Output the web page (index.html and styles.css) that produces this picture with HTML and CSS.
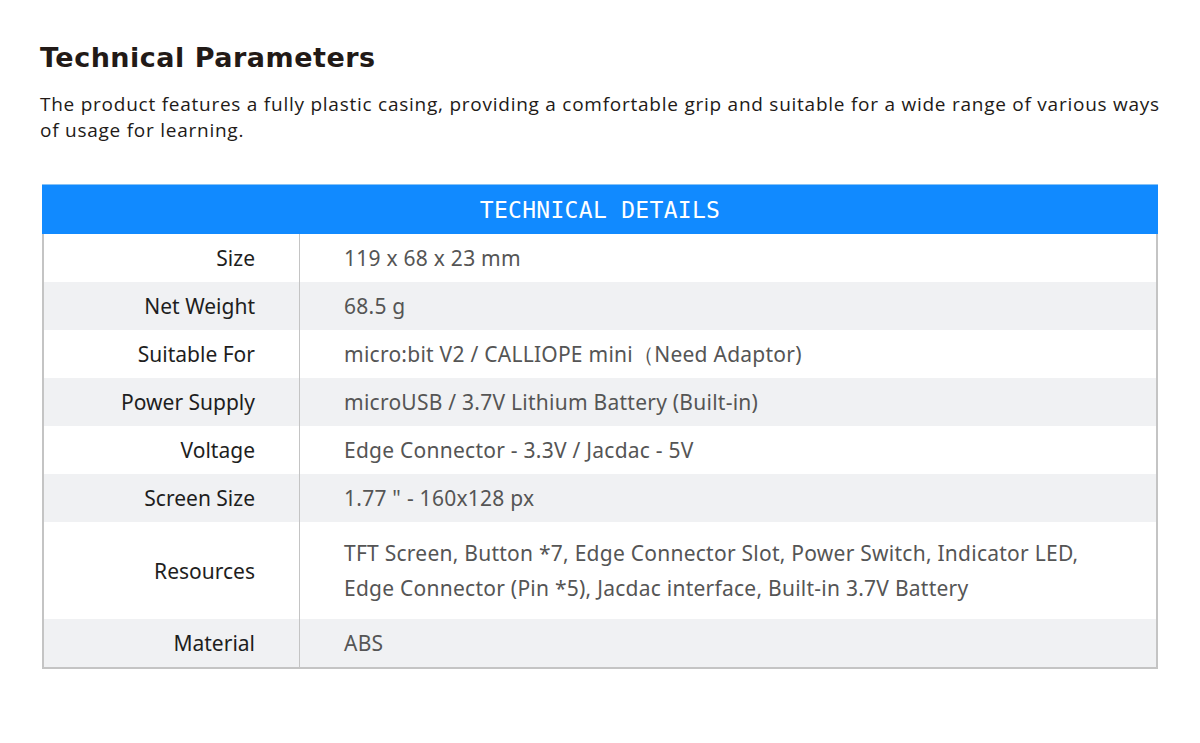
FILE: index.html
```html
<!DOCTYPE html>
<html>
<head>
<meta charset="utf-8">
<link rel="stylesheet" href="styles.css">
</head>
<body>
<div class="page">
  <h1 class="title">Technical Parameters</h1>
  <p class="intro">The product features a fully plastic casing, providing a comfortable grip and suitable for a wide range of various ways of usage for learning.</p>
  <div class="table">
    <div class="thead">TECHNICAL DETAILS</div>
    <div class="row"><div class="label">Size</div><div class="value">119 x 68 x 23 mm</div></div>
    <div class="row alt"><div class="label">Net Weight</div><div class="value">68.5 g</div></div>
    <div class="row"><div class="label">Suitable For</div><div class="value">micro:bit V2 / CALLIOPE mini（Need Adaptor)</div></div>
    <div class="row alt"><div class="label">Power Supply</div><div class="value">microUSB / 3.7V Lithium Battery (Built-in)</div></div>
    <div class="row"><div class="label">Voltage</div><div class="value">Edge Connector - 3.3V / Jacdac - 5V</div></div>
    <div class="row alt"><div class="label">Screen Size</div><div class="value">1.77 " - 160x128 px</div></div>
    <div class="row tall"><div class="label">Resources</div><div class="value">TFT Screen, Button *7, Edge Connector Slot, Power Switch, Indicator LED, Edge Connector (Pin *5), Jacdac interface, Built-in 3.7V Battery</div></div>
    <div class="row alt last"><div class="label">Material</div><div class="value">ABS</div></div>
  </div>
</div>
</body>
</html>
```
FILE: styles.css
```css
html, body {
  margin: 0;
  padding: 0;
  background: #ffffff;
}
.page {
  padding: 38px 40px 0 40px;
  font-family: "Open Sans", "Noto Sans", sans-serif;
}
.title {
  margin: 0;
  font-family: "DejaVu Sans", sans-serif;
  font-weight: bold;
  font-size: 27px;
  line-height: 40px;
  color: #221a17;
  letter-spacing: 0.5px;
}
.intro {
  margin: 13px 0 0 0;
  font-size: 19px;
  line-height: 26px;
  color: #221a17;
  letter-spacing: 0.75px;
}
.table {
  margin: 41px 0 0 2px;
  width: 1116px;
  border-top: 1px solid #86c2f5;
  border-bottom: 2px solid #c4c4c4;
  font-family: "Noto Sans", sans-serif;
}
.thead {
  height: 49px;
  background: #118aff;
  color: #ffffff;
  font-family: "DejaVu Sans Mono", monospace;
  font-size: 23px;
  display: flex;
  align-items: center;
  justify-content: center;
  letter-spacing: 0.3px;
}
.row {
  display: flex;
  min-height: 48px;
  border-left: 2px solid #c4c4c4;
  border-right: 2px solid #c4c4c4;
  background: #ffffff;
}
.row.alt {
  background: #f0f1f3;
}
.row.tall {
  min-height: 97px;
}
.label {
  width: 256px;
  flex: none;
  box-sizing: border-box;
  padding-right: 44px;
  text-align: right;
  border-right: 1px solid #c4c4c4;
  color: #1e1e1e;
  font-size: 21px;
  display: flex;
  align-items: center;
  justify-content: flex-end;
}
.value {
  flex: 1;
  padding: 0 40px 0 44px;
  color: #555555;
  font-size: 21px;
  line-height: 35px;
  letter-spacing: 0.25px;
  display: flex;
  align-items: center;
}
```
